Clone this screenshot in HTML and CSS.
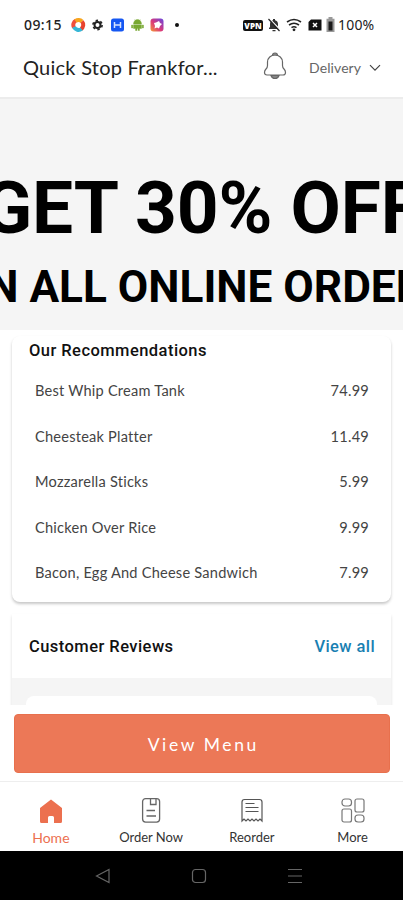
FILE: index.html
```
<!DOCTYPE html>
<html lang="en">
<head>
<meta charset="utf-8">
<title>Quick Stop Frankford</title>
<link rel="stylesheet" href="styles.css">
</head>
<body>
<div class="app">
  <div class="status">
    <span class="time">09:15</span>
    <svg class="s-apps" width="112" height="16" viewBox="0 0 112 16">
      <g fill="none" stroke-width="4">
        <path d="M3 10.5A5 5 0 0 1 5 3.500" stroke="#f0503c"/>
        <path d="M4.500 4A5 5 0 0 1 11 4.500" stroke="#f7a51e"/>
        <path d="M11 4.500A5 5 0 0 1 10 12" stroke="#e8432e"/>
        <path d="M10.500 12A5 5 0 0 1 3 10" stroke="#35b6d6"/>
      </g>
      <circle cx="26.500" cy="8" r="3" fill="none" stroke="#222" stroke-width="2"/>
      <circle cx="26.500" cy="8" r="4.600" fill="none" stroke="#222" stroke-width="1.600" stroke-dasharray="2.400 2.417"/>
      <rect x="40" y="1.500" width="13" height="13" rx="2.500" fill="#1557f2"/>
      <path d="M43.500 5v6M49.500 5v6M44 8h5" stroke="#d5e2ff" stroke-width="1.500"/>
      <path d="M62.500 7a4 4.500 0 0 1 8 0zM62.500 7.800h8v3.700h-2v2H67v-2h-1v2h-1.500v-2h-2zM60.500 8h1.300v3h-1.300zM71.200 8h1.300v3h-1.300zM63.500 2.500l1.500 2M69.500 2.500l-1.500 2" fill="#78a832" stroke="#78a832" stroke-width=".4"/>
      <defs><linearGradient id="g" x1="0" y1="1" x2="1" y2="0"><stop offset="0" stop-color="#f59b35"/><stop offset=".45" stop-color="#dc3978"/><stop offset="1" stop-color="#6547e3"/></linearGradient></defs>
      <rect x="79.500" y="1.500" width="13" height="13" rx="3" fill="url(#g)"/>
      <path d="M83 6l2-.5L88 4l1 2 2 1-2 2-1 2.500-2-1-2.500 1 .5-2.500z" fill="#fff"/>
      <circle cx="106" cy="8" r="2" fill="#111"/>
    </svg>
    <span class="vpn">VPN</span>
    <svg class="s-sys" width="69" height="16" viewBox="0 0 69 16">
      <path d="M2 12V11l1-1V7a4 4 0 0 1 3-3.800V2h2v1.200A4 4 0 0 1 11 7v3l1 1v1zM5.500 13h3v1.200h-3z" fill="#333"/>
      <path d="M2.500 2l11 11" stroke="#fff" stroke-width="1.500"/><path d="M1.500 2l11 12" stroke="#222" stroke-width="1.200"/>
      <g fill="none" stroke="#222" stroke-width="1.600"><path d="M20 5q7-5 14 0M22 8q5-3.500 10 0M24.500 10.600q2.500-1.800 5 0"/></g>
      <circle cx="27" cy="12.800" r="1.400" fill="#222"/>
      <path d="M44 2.500h10.500v11H41.500V5z" fill="#111"/><path d="M46 6l4 4M50 6l-4 4" stroke="#fff" stroke-width="1.500"/>
      <path d="M61.500 0h4v1.700h2v13.300h-8V1.700h2z" fill="#999"/><path d="M61.500 4.500h4v9h-4z" fill="#1b1b1b"/>
    </svg>
    <span class="pct">100%</span>
  </div>
  <header class="header">
    <span class="store">Quick Stop Frankfor...</span>
    <svg class="bell" width="24" height="30" viewBox="0 0 24 30" fill="none" stroke="#666" stroke-width="1.200">
      <path d="M9.500 4.500Q9.500 2 12 2t2.500 2.500" fill="#999"/>
      <path d="M4.500 14.500V11a7.500 7 0 0 1 15 0v3.500q0 2 1.500 3.500 1.500 1.500 1.500 3.500 0 2.500-2.500 2.500H4q-2.500 0-2.500-2.500 0-2 1.500-3.500 1.500-1.500 1.500-3.500z"/>
      <path d="M8 24.500q1 3 4 3t4-3z" fill="#888"/>
    </svg>
    <span class="delivery">Delivery</span>
    <svg class="chev" width="12" height="8" viewBox="0 0 12 8" fill="none" stroke="#444" stroke-width="1.200"><path d="M1 1.200l5 5 5-5"/></svg>
  </header>
  <section class="banner">
    <div class="big">GET 30% OFF</div>
    <div class="sub">ON ALL ONLINE ORDERS</div>
  </section>
  <main class="content">
    <section class="card recs">
      <h2>Our Recommendations</h2>
      <div class="row"><span>Best Whip Cream Tank</span><span>74.99</span></div>
      <div class="row"><span>Cheesteak Platter</span><span>11.49</span></div>
      <div class="row"><span>Mozzarella Sticks</span><span>5.99</span></div>
      <div class="row"><span>Chicken Over Rice</span><span>9.99</span></div>
      <div class="row"><span>Bacon, Egg And Cheese Sandwich</span><span>7.99</span></div>
    </section>
    <section class="card reviews">
      <div class="rhead"><h2>Customer Reviews</h2><a class="all">View all</a></div>
      <div class="rbody"><div class="review"></div></div>
    </section>
  </main>
  <div class="action"><div class="btn">View Menu</div></div>
  <nav class="tabs">
    <div class="tab active">
      <svg width="26" height="28" viewBox="0 0 26 28"><path d="M13 2.500 24 11V24.500q0 1.500-1.500 1.500H16V20.500q0-1.500-1.500-1.500h-3Q10 19 10 20.500V26H3.500Q2 26 2 24.500V11z" fill="#ec704f"/></svg>
      <span>Home</span>
    </div>
    <div class="tab">
      <svg width="26" height="28" viewBox="0 0 26 28" fill="none" stroke="#666" stroke-width="1.300"><rect x="4.600" y="1.600" width="17" height="23.500" rx="3"/><path d="M12.500 2v5.500h5.500V2M8.500 13.500H17M8.500 19H18"/></svg>
      <span>Order Now</span>
    </div>
    <div class="tab">
      <svg width="26" height="28" viewBox="0 0 26 28" fill="none" stroke="#555" stroke-width="1.200"><path d="M3 24V5q0-2.500 2.500-2.500h15Q23 2.500 23 5v19l-2-2-2 2-2-2-2 2-2-2-2 2-2-2-2 2-2-2zM6.500 6.500h9M6.500 10.500h13M6.500 14.500h13"/></svg>
      <span>Reorder</span>
    </div>
    <div class="tab">
      <svg width="26" height="28" viewBox="0 0 26 28" fill="none" stroke="#777" stroke-width="1.200"><rect x="2" y="2" width="9.500" height="7" rx="3"/><rect x="2" y="12" width="9.500" height="13" rx="2"/><rect x="15" y="2" width="9" height="13" rx="2"/><rect x="15" y="18" width="9" height="7" rx="3"/></svg>
      <span>More</span>
    </div>
  </nav>
  <div class="sysnav">
    <svg width="16" height="16" viewBox="0 0 16 16"><path d="M1.500 8 14 1.500v13z"/></svg>
    <svg width="16" height="16" viewBox="0 0 16 16"><rect x="1.500" y="1.500" width="13" height="13" rx="3"/></svg>
    <svg width="16" height="16" viewBox="0 0 16 16"><path d="M1 1.500h14M1 8h14M1 14.500h14"/></svg>
  </div>
</div>
</body>
</html>
```
FILE: styles.css
```
* { box-sizing: border-box; }
body { margin: 0; background: #fff; font-family: Lato, "Liberation Sans", sans-serif; color: #333; }
svg { display: block; flex: none; }
.app { width: 403px; height: 900px; overflow: hidden; display: flex; flex-direction: column; }
.app > * { flex: none; }
.status { height: 50px; display: flex; align-items: center; padding-left: 24px; font-family: "Noto Sans", sans-serif; color: #222; }
.time { width: 47px; font-size: 14px; line-height: 20px; letter-spacing: .4px; font-weight: 500; }
.s-apps { margin-right: 60px; }
.vpn { width: 20px; height: 11px; border-radius: 2px; background: #111; color: #fff; font: 900 8px/11px "Noto Sans", sans-serif; text-align: center; }
.s-sys { margin: 0 2px 0 4px; }
.pct { font-size: 14px; line-height: 18px; margin-bottom: 1px; letter-spacing: .2px; }
.header { height: 49px; border-bottom: 2px solid #ececec; display: flex; align-items: center; padding: 0 0 13px 23px; }
.store { width: 239px; font-size: 20px; line-height: 24px; margin-bottom: 1px; letter-spacing: .25px; color: #222; }
.bell { margin: -2px 0 0 1px; }
.delivery { width: 60px; margin-left: 22px; font-size: 14px; letter-spacing: .1px; color: #666; }
.chev { margin-top: 2px; }
.banner { height: 231px; padding-top: 73px; background: #f5f5f5; overflow: hidden; display: flex; flex-direction: column; align-items: center; font-family: Roboto, sans-serif; font-weight: 700; color: #000; white-space: nowrap; }
.big { font-size: 73px; line-height: 73px; letter-spacing: -.1px; }
.sub { margin-top: 20px; padding-left: 5px; font-size: 44.200px; line-height: 45px; }
.content { height: 375px; padding: 6px 12px 0; overflow: hidden; }
.card { background: #fff; box-shadow: 0 2px 3px rgba(0,0,0,.22); }
h2 { margin: 0; font: 500 16.500px/20px Roboto, sans-serif; letter-spacing: .45px; color: #111; }
.recs { height: 266px; border-radius: 8px; padding: 5px 22px 0 17px; }
.recs h2 { margin-bottom: 7px; }
.row { height: 45.5px; padding-left: 6px; display: flex; align-items: center; justify-content: space-between; font-size: 14.600px; color: #444; letter-spacing: .22px; }
.reviews { height: 110px; margin-top: 12px; display: flex; flex-direction: column; box-shadow: 0 2px 3px rgba(0,0,0,.14); }
.rhead { flex: none; height: 64px; padding: 2px 16px 0 17px; display: flex; align-items: center; justify-content: space-between; }
.all { font: 500 16.500px/20px Roboto, sans-serif; letter-spacing: .4px; color: #1980b2; }
.rbody { flex: 1; background: #f5f5f5; padding: 18px 14px 0; }
.review { height: 40px; background: #fff; border-radius: 8px; }
.action { height: 77px; padding: 9px 13.5px 0 14px; border-bottom: 1px solid #eee; }
.btn { height: 59px; border-radius: 4px; background: #ec7857; border: 1px solid #e8704d; color: #fff; font-size: 17.500px; line-height: 60px; letter-spacing: 2.600px; text-align: center; padding-left: 3px; }
.tabs { height: 69px; display: grid; grid-template-columns: repeat(4, 1fr); }
.tab { display: flex; flex-direction: column; align-items: center; padding-top: 15px; font-size: 13px; line-height: 16px; color: #333; }
.tab span { margin-top: 4px; }
.active { color: #ec704f; padding-left: 1px; }
.active span { margin-top: 5px; font-size: 14px; }
.sysnav { height: 49px; background: #000; display: flex; align-items: center; padding-left: 95px; gap: 80px; }
.sysnav svg { fill: none; stroke: #666; stroke-width: 1.200; }
```
